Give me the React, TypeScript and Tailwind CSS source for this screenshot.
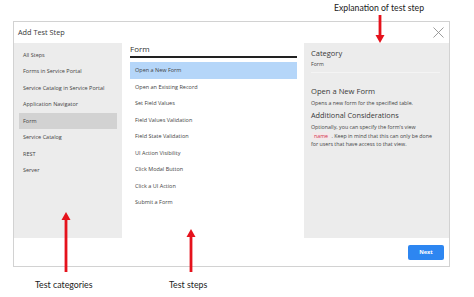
import { X } from "lucide-react";

const categories = [
  "All Steps",
  "Forms in Service Portal",
  "Service Catalog in Service Portal",
  "Application Navigator",
  "Form",
  "Service Catalog",
  "REST",
  "Server",
];

const steps = [
  "Open a New Form",
  "Open an Existing Record",
  "Set Field Values",
  "Field Values Validation",
  "Field State Validation",
  "UI Action Visibility",
  "Click Modal Button",
  "Click a UI Action",
  "Submit a Form",
];

// vertical red arrow pointing up or down, drawn as a callout
function Arrow({ length, down = false }: { length: number; down?: boolean }) {
  const h = length;
  const head = down
    ? `M0.5 ${h - 8} L9.5 ${h - 8} L5 ${h} Z`
    : `M0.5 8 L9.5 8 L5 0 Z`;
  const shaft = down ? `M3.6 0 H6.4 V${h - 7} H3.6 Z` : `M3.6 7 H6.4 V${h} H3.6 Z`;
  return (
    <svg width="10" height={h} viewBox={`0 0 10 ${h}`}>
      <path d={shaft} fill="#e5121c" />
      <path d={head} fill="#e5121c" />
    </svg>
  );
}

export default function App() {
  return (
    <div
      className="relative w-[474px] h-[297px] overflow-hidden bg-white pt-[21px] pl-[13px]"
      style={{ fontFamily: "'Open Sans', Lato, sans-serif" }}
    >
      {/* Dialog */}
      <div className="w-[437px] h-[246px] border border-[#d2d2d2] flex flex-col bg-white">
        <div className="h-[21px] flex items-center justify-between pl-[4px] pr-[1px]">
          <span className="text-[7.3px] text-[#3a3a3a]">Add Test Step</span>
          <X className="w-[19px] h-[19px] text-[#8d8d8d]" strokeWidth={1.1} />
        </div>

        <div className="flex h-[195px]">
          {/* Categories */}
          <div className="w-[108px] bg-[#ececec] px-[5px] pt-[3.5px]">
            {categories.map((c) => (
              <div
                key={c}
                className={`h-[16.5px] flex items-center pl-[4px] text-[5.5px] text-[#444] ${
                  c === "Form" ? "bg-[#d2d2d2]" : ""
                }`}
              >
                {c}
              </div>
            ))}
          </div>

          {/* Steps */}
          <div className="w-[182px] bg-white pl-[8px] pr-[7px]">
            <div className="h-[15px] flex items-end pb-[1px] text-[8px] text-[#333] border-b-2 border-[#222]">
              Form
            </div>
            <div className="pt-[4px]">
              {steps.map((s, i) => (
                <div
                  key={s}
                  className={`h-[16.5px] flex items-center pl-[5px] text-[5.5px] text-[#444] ${
                    i === 0 ? "bg-[#b5d6f9]" : ""
                  }`}
                >
                  {s}
                </div>
              ))}
            </div>
          </div>

          {/* Details */}
          <div className="flex-1 bg-[#ececec] px-[7px] pt-[4px] text-[#444]">
            <div className="text-[7.5px] text-[#3a3a3a] leading-[12px]">Category</div>
            <div className="text-[5.2px] leading-[8px] mt-[1px]">Form</div>
            <div className="mt-[4px] border-b border-[#f4f4f4] mr-[2px]" />
            <div className="mt-[13px] text-[7.6px] text-[#3a3a3a] leading-[11px]">Open a New Form</div>
            <div className="text-[5.3px] leading-[8px] mt-[2px]">Opens a new form for the specified table.</div>
            <div className="mt-[3px] text-[7.3px] text-[#3a3a3a] leading-[11px]">Additional Considerations</div>
            <div className="text-[5.3px] leading-[8.7px] mt-[2px] whitespace-nowrap">
              <div>Optionally, you can specify the form's view</div>
              <div>
                <span className="text-[#d6314a] bg-[#f3e8ea] px-[2px] ml-[1px]">name</span> . Keep in mind that this can only be done
              </div>
              <div>for users that have access to that view.</div>
            </div>
          </div>
        </div>

        <div className="flex-1 flex items-center justify-end pr-[5px]">
          <button className="w-[36px] h-[15px] rounded-[2px] bg-[#2d86f1] text-white text-[5.6px] font-bold">
            Next
          </button>
        </div>
      </div>

      {/* Callouts */}
      <div
        className="absolute left-[334px] top-[2px] text-[8.7px] text-[#222] leading-[11px]"
        style={{ fontFamily: "Lato, sans-serif" }}
      >
        Explanation of test step
      </div>
      <div className="absolute left-[375px] top-[15px]">
        <Arrow length={28} down />
      </div>

      <div className="absolute left-[61px] top-[212px]">
        <Arrow length={60} />
      </div>
      <div className="absolute left-[186px] top-[229px]">
        <Arrow length={43} />
      </div>
      <div
        className="absolute left-[35px] top-[279px] text-[8.8px] text-[#222] leading-[11px]"
        style={{ fontFamily: "Lato, sans-serif" }}
      >
        Test categories
      </div>
      <div
        className="absolute left-[169px] top-[279px] text-[8.8px] text-[#222] leading-[11px]"
        style={{ fontFamily: "Lato, sans-serif" }}
      >
        Test steps
      </div>
    </div>
  );
}
